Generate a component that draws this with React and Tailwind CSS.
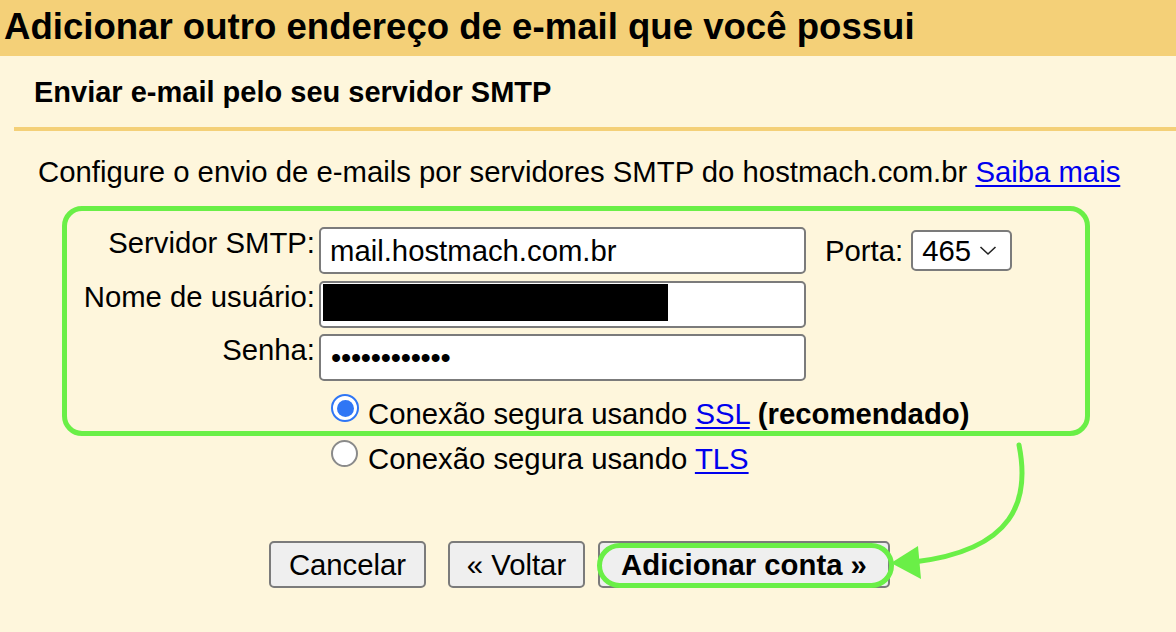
import React from "react";

function Radio({ checked }) {
  if (checked) {
    return (
      <span className="flex h-[28px] w-[28px] shrink-0 items-center justify-center rounded-full border-[2px] border-[#2f76f5] bg-white">
        <span className="h-[17px] w-[17px] rounded-full bg-[#2f76f5]" />
      </span>
    );
  }
  return (
    <span className="h-[27px] w-[27px] shrink-0 rounded-full border-[2px] border-[#8a8a8a] bg-white" />
  );
}

export default function App() {
  return (
    <div className="relative h-[632px] w-[1176px] overflow-hidden bg-[#fef6dc] font-['Liberation_Sans',Arial,sans-serif] text-black">
      {/* header */}
      <div className="h-[56px] bg-[#f4d078] pl-[4px] text-[36.6px] font-bold leading-[54px]">
        Adicionar outro endereço de e-mail que você possui
      </div>

      {/* subheader */}
      <div className="pl-[34px] pt-[22px] text-[29px] font-bold leading-[29px]">
        Enviar e-mail pelo seu servidor SMTP
      </div>
      <div className="ml-[14px] mt-[20px] h-[4px] bg-[#f4d078]" />

      {/* description */}
      <div className="pl-[38px] pt-[26px] text-[29.3px] leading-[29px]">
        Configure o envio de e-mails por servidores SMTP do hostmach.com.br{" "}
        <span className="text-[#0000ee] underline underline-offset-[3px]">Saiba mais</span>
      </div>

      {/* highlighted box */}
      <div className="ml-[62px] mt-[20px] h-[230px] w-[1028px] rounded-[20px] border-[5px] border-[#6aef47] pt-[16px] text-[29.3px] leading-[29px]">
        <div className="flex items-start">
          <div className="w-[248px] pt-[1px] text-right">Servidor SMTP:</div>
          <div className="ml-[4px] flex h-[47px] w-[487px] items-center rounded-[5px] border-[2px] border-[#7b7b7b] bg-white pl-[9px]">
            mail.hostmach.com.br
          </div>
          <div className="ml-[19px] flex h-[47px] items-center">Porta:</div>
          <div className="ml-[8px] mt-[3px] flex h-[41px] w-[101px] items-center rounded-[5px] border-[2px] border-[#7b7b7b] bg-white pl-[9px]">
            <span>465</span>
            <svg className="ml-[8px]" width="18" height="11" viewBox="0 0 18 11" fill="none">
              <polyline points="1.5,2 9,9 16.5,2" stroke="#222" strokeWidth="1.6" />
            </svg>
          </div>
        </div>
        <div className="mt-[7px] flex items-start">
          <div className="w-[248px] pt-[1px] text-right">Nome de usuário:</div>
          <div className="ml-[4px] h-[47px] w-[487px] rounded-[5px] border-[2px] border-[#7b7b7b] bg-white pl-[2px] pt-[1px]">
            <div className="h-[37px] w-[345px] bg-black" />
          </div>
        </div>
        <div className="mt-[6px] flex items-start">
          <div className="w-[248px] pt-[1px] text-right">Senha:</div>
          <div className="ml-[4px] flex h-[47px] w-[487px] items-center rounded-[5px] border-[2px] border-[#7b7b7b] bg-white pl-[10px] tracking-[-0.3px]">
            ••••••••••••
          </div>
        </div>
        <div className="ml-[264px] mt-[13px] flex items-start">
          <Radio checked />
          <div className="ml-[9px] mt-[5px]">
            Conexão segura usando{" "}
            <span className="text-[#0000ee] underline underline-offset-[3px]">SSL</span>{" "}
            <span className="font-bold">(recomendado)</span>
          </div>
        </div>
      </div>

      {/* second radio */}
      <div className="ml-[331px] mt-[4px] flex items-start text-[29.3px] leading-[29px]">
        <Radio />
        <div className="ml-[10px] mt-[4px]">
          Conexão segura usando{" "}
          <span className="text-[#0000ee] underline underline-offset-[3px]">TLS</span>
        </div>
      </div>

      {/* buttons */}
      <div className="ml-[269px] mt-[68px] flex items-start text-[29.3px] leading-[29px]">
        <div className="flex h-[47px] w-[157px] items-center justify-center rounded-[5px] border-[2px] border-[#7b7b7b] bg-[#efefef]">
          Cancelar
        </div>
        <div className="ml-[22px] flex h-[47px] w-[137px] items-center justify-center rounded-[5px] border-[2px] border-[#7b7b7b] bg-[#efefef]">
          « Voltar
        </div>
        <div className="relative ml-[13px] flex h-[47px] w-[292px] items-center justify-center rounded-[5px] border-[2px] border-[#7b7b7b] bg-[#efefef] font-bold">
          Adicionar conta »
          <span className="absolute -bottom-[2px] -left-[3px] -right-[6px] top-[0px] rounded-full border-[5px] border-[#6aef47]" />
        </div>
      </div>

      {/* arrow */}
      <svg className="pointer-events-none absolute left-0 top-0" width="1176" height="632" viewBox="0 0 1176 632" fill="none">
        <path d="M1019 445 C 1030 500, 1015 550, 914 562" stroke="#6aef47" strokeWidth="5" strokeLinecap="round" />
        <polygon points="891,563 918,546 921,579" fill="#6aef47" />
      </svg>
    </div>
  );
}
